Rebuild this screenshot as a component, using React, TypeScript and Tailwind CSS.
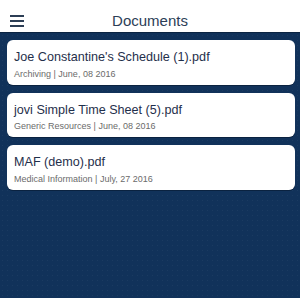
import React from 'react'

type Doc = { name: string; category: string; date: string }

const DOCS: Doc[] = [
  { name: "Joe Constantine's Schedule (1).pdf", category: 'Archiving', date: 'June, 08 2016' },
  { name: 'jovi Simple Time Sheet (5).pdf', category: 'Generic Resources', date: 'June, 08 2016' },
  { name: 'MAF (demo).pdf', category: 'Medical Information', date: 'July, 27 2016' },
]

export default function App() {
  return (
    <div className="w-[300px] h-[298px] flex flex-col bg-[#11325a] font-['Liberation_Sans',Arial,sans-serif] overflow-hidden">
      {/* Header */}
      <div className="h-[33px] shrink-0 bg-white relative flex items-center justify-center border-b border-[#0b2442]">
        <button className="absolute left-[10px] top-[15px] flex flex-col gap-[3.5px] w-[14px]">
          <span className="block h-[1.5px] w-full bg-[#2c3e55]" />
          <span className="block h-[1.5px] w-full bg-[#2c3e55]" />
          <span className="block h-[1.5px] w-full bg-[#2c3e55]" />
        </button>
        <h1 className="text-[15px] text-[#2c3e57] leading-none mt-[8px]">Documents</h1>
      </div>

      {/* List */}
      <div className="flex-1 bg-[#11325a] bg-[radial-gradient(circle,rgba(255,255,255,0.045)_0.8px,transparent_1px)] bg-[size:5px_5px] pt-[7px] pl-[7px] pr-[5px] flex flex-col gap-[8px]">
        {DOCS.map(d => (
          <div key={d.name} className="h-[44.5px] shrink-0 bg-white rounded-[6px] px-[7px] pt-[10px] shadow-[0_1px_0_#0a2240]">
            <div className="text-[12.6px] leading-[15px] text-[#1f2f4b] whitespace-nowrap">{d.name}</div>
            <div className="text-[9px] leading-[12px] text-[#6b6b6b] mt-[2.5px] whitespace-nowrap">
              {d.category} | {d.date}
            </div>
          </div>
        ))}
      </div>
    </div>
  )
}
